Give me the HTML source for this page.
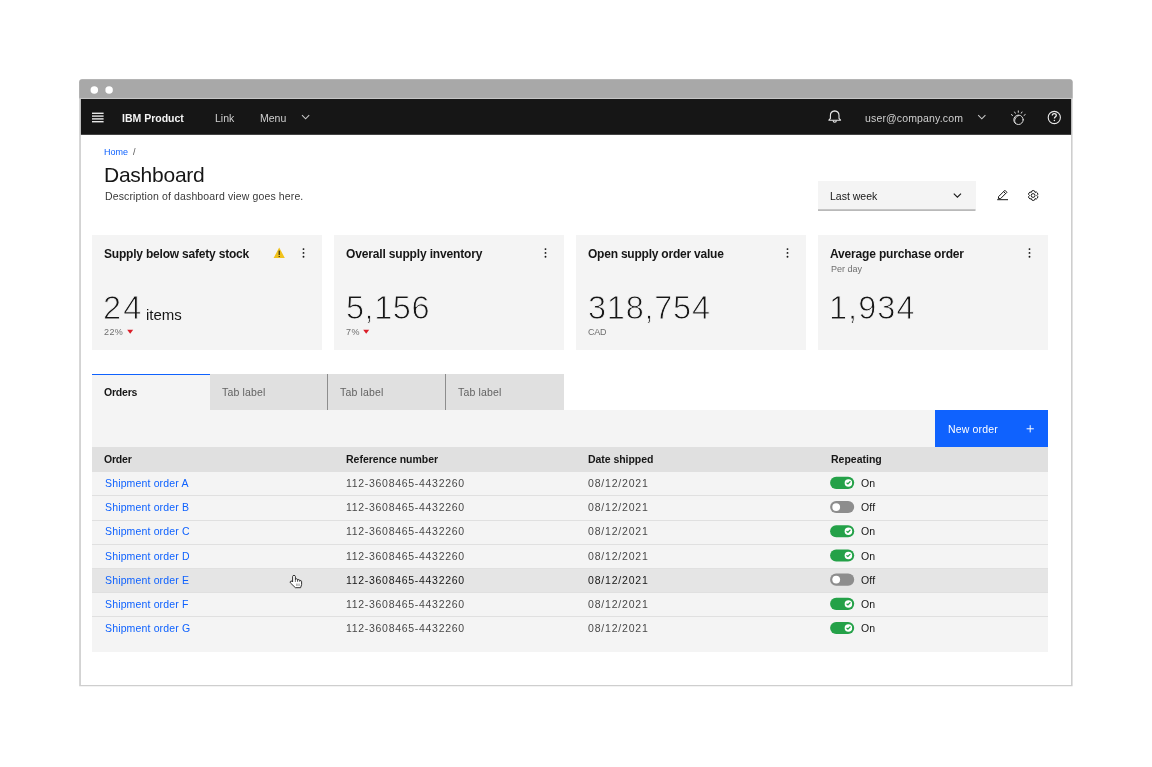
<!DOCTYPE html>
<html><head><meta charset="utf-8">
<style>
*{box-sizing:border-box;margin:0;padding:0}
html,body{width:1152px;height:767px;overflow:hidden;background:#fff}
body{position:relative;font-family:"Liberation Sans",sans-serif;color:#161616}
.a{position:absolute}
.t{position:absolute;white-space:nowrap;line-height:1;will-change:transform}
svg{position:absolute;overflow:visible}
</style></head><body>

<!-- window frame -->
<svg style="left:0;top:0" width="1152" height="767">
  <path d="M79.2 686.3 L79.2 82.2 Q79.2 79.2 82.2 79.2 L1069.6 79.2 Q1072.6 79.2 1072.6 82.2 L1072.6 686.3 Z" fill="#cecece"/>
  <path d="M79.2 97.9 L79.2 82.2 Q79.2 79.2 82.2 79.2 L1069.6 79.2 Q1072.6 79.2 1072.6 82.2 L1072.6 97.9 Z" fill="#a8a8a8"/>
  <rect x="79.2" y="97.9" width="993.4" height="1.1" fill="#c6c6c6"/>
  <rect x="80.9" y="99" width="990.1" height="586" fill="#fff"/>
  <circle cx="94.3" cy="89.9" r="3.75" fill="#fff"/>
  <circle cx="109.1" cy="89.9" r="3.75" fill="#fff"/>
</svg>

<!-- header -->
<svg style="left:0;top:0" width="1" height="1"><rect x="80.9" y="99" width="990.2" height="35.8" fill="#161616"/></svg>
<svg style="left:0;top:0" width="1152" height="140">
  <g fill="#e8e8e8">
    <rect x="92" y="112.6" width="11.6" height="1.4"/>
    <rect x="92" y="115.4" width="11.6" height="1.4"/>
    <rect x="92" y="118.2" width="11.6" height="1.4"/>
    <rect x="92" y="121.0" width="11.6" height="1.4"/>
  </g>
</svg>
<div class="t" style="left:121.7px;top:112.6px;font-size:10.5px;font-weight:700;color:#f4f4f4">IBM Product</div>
<div class="t" style="left:215.4px;top:112.6px;font-size:10.5px;color:#d0d0d0">Link</div>
<div class="t" style="left:260.2px;top:112.6px;font-size:10.5px;color:#d0d0d0">Menu</div>
<div class="t" style="left:865.1px;top:112.6px;font-size:10.5px;color:#d0d0d0;letter-spacing:0.15px">user@company.com</div>


<!-- header right -->
<svg style="left:0;top:0" width="1152" height="140">
  <!-- menu chevron -->
  <path d="M302 115.2 L305.6 118.8 L309.2 115.2" fill="none" stroke="#c6c6c6" stroke-width="1.1"/>
  <!-- bell -->
  <path d="M828.9 120.2 L830.4 118.4 L830.4 115.4 C830.4 112.8 832.1 111.2 834.7 110.9 C837.3 111.2 839 112.8 839 115.4 L839 118.4 L840.6 120.2 Z" fill="none" stroke="#e8e8e8" stroke-width="1.1" stroke-linejoin="round"/>
  <path d="M833.1 120.6 A1.65 1.65 0 0 0 836.4 120.6" fill="none" stroke="#e8e8e8" stroke-width="1.1"/>
  <!-- user chevron -->
  <path d="M978.2 115.2 L981.8 118.8 L985.4 115.2" fill="none" stroke="#c6c6c6" stroke-width="1.1"/>
  <!-- watson -->
  <g fill="none" stroke="#e0e0e0" stroke-width="1" stroke-linecap="round">
    <circle cx="1018.5" cy="119.8" r="4.7"/>
    <path d="M1015.6 123.6 C1013.4 121 1015 116.6 1018.6 115.6"/>
    <path d="M1018.3 110.9 L1018.3 112.3"/>
    <path d="M1014.6 112.0 L1015.3 113.2"/>
    <path d="M1022.0 112.0 L1021.3 113.2"/>
    <path d="M1011.4 114.6 L1012.6 115.4"/>
    <path d="M1025.2 114.6 L1024.0 115.4"/>
  </g>
  <!-- help -->
  <circle cx="1054.3" cy="117.5" r="6.1" fill="none" stroke="#e8e8e8" stroke-width="1.1"/>
  <path d="M1052.3 115.5 C1052.3 114.3 1053.2 113.6 1054.3 113.6 C1055.5 113.6 1056.3 114.4 1056.3 115.4 C1056.3 116.7 1054.4 116.8 1054.4 118.5" fill="none" stroke="#e8e8e8" stroke-width="1.3"/>
  <circle cx="1054.4" cy="120.6" r="0.75" fill="#e8e8e8"/>
</svg>

<!-- page header -->
<div class="t" style="left:104.2px;top:147.9px;font-size:9px;color:#0f62fe">Home</div>
<div class="t" style="left:132.5px;top:147.9px;font-size:9px;color:#525252">/</div>
<div class="t" style="left:104.3px;top:164.1px;font-size:21px;color:#161616;letter-spacing:-0.25px">Dashboard</div>
<div class="t" style="left:104.5px;top:190.8px;font-size:10.5px;color:#393939;letter-spacing:0.13px">Description of dashboard view goes here.</div>

<!-- dropdown -->
<div class="a" style="left:818px;top:181px;width:157.5px;height:29px;background:#f4f4f4"></div>
<svg style="left:0;top:0" width="1" height="1"><rect x="818" y="209.4" width="157.5" height="1.4" fill="#a8a8a8"/></svg>
<div class="t" style="left:830.4px;top:190.5px;font-size:10.5px;color:#161616">Last week</div>
<svg style="left:0;top:0" width="1152" height="220">
  <path d="M953.8 193.6 L957.4 197.2 L961 193.6" fill="none" stroke="#161616" stroke-width="1.1"/>
  <!-- edit -->
  <g fill="none" stroke="#161616" stroke-width="1">
    <path d="M997.2 199.7 L1008 199.7"/>
    <path d="M998.4 198.6 L998.6 196.6 L1004.9 190.3 L1006.9 192.3 L1000.6 198.6 Z" stroke-linejoin="round"/>
    <path d="M1003.6 191.6 L1005.6 193.6"/>
  </g>
  <!-- settings gear -->
  <g fill="none" stroke="#161616" stroke-width="1">
    <path d="M1031.38 192.34 A1.65 1.65 0 0 1 1035.03 192.34 A1.65 1.65 0 0 1 1036.85 195.50 A1.65 1.65 0 0 1 1035.03 198.66 A1.65 1.65 0 0 1 1031.38 198.66 A1.65 1.65 0 0 1 1029.55 195.50 A1.65 1.65 0 0 1 1031.38 192.34 Z" stroke-linejoin="round"/>
    <circle cx="1033.1" cy="195.5" r="1.9"/>
  </g>
</svg>


<!-- cards -->
<div class="a" style="left:91.5px;top:235px;width:230px;height:114.5px;background:#f4f4f4"></div>
<div class="t" style="left:104.0px;top:247.9px;font-size:12px;font-weight:700;color:#161616;letter-spacing:-0.2px">Supply below safety stock</div>
<svg style="left:0;top:0" width="1" height="1"><g fill="#161616"><circle cx="303.5" cy="249.1" r="0.95"/><circle cx="303.5" cy="252.9" r="0.95"/><circle cx="303.5" cy="256.7" r="0.95"/></g></svg>
<svg style="left:0;top:0" width="1" height="1"><path d="M279.2 247.6 L284.8 258 L273.6 258 Z" fill="#f1c21b"/><rect x="278.7" y="250.6" width="1" height="4.4" fill="#161616"/><rect x="278.7" y="256" width="1" height="1" fill="#161616"/></svg>
<div class="t" style="left:103px;top:292px;font-size:32.5px;color:#161616;-webkit-text-stroke:0.9px #f4f4f4;letter-spacing:2.3px">24</div>
<div class="t" style="left:146.0px;top:306.6px;font-size:15px;color:#161616">items</div>
<div class="t" style="left:104.0px;top:327.9px;font-size:9px;color:#6f6f6f;letter-spacing:0.4px">22%</div>
<svg style="left:0;top:0" width="1" height="1"><path d="M127.2 329.8 L133.2 329.8 L130.2 333.8 Z" fill="#da1e28"/></svg>
<div class="a" style="left:333.5px;top:235px;width:230px;height:114.5px;background:#f4f4f4"></div>
<div class="t" style="left:346.0px;top:247.9px;font-size:12px;font-weight:700;color:#161616;letter-spacing:-0.16px">Overall supply inventory</div>
<svg style="left:0;top:0" width="1" height="1"><g fill="#161616"><circle cx="545.5" cy="249.1" r="0.95"/><circle cx="545.5" cy="252.9" r="0.95"/><circle cx="545.5" cy="256.7" r="0.95"/></g></svg>
<div class="t" style="left:346px;top:292px;font-size:32.5px;color:#161616;-webkit-text-stroke:0.9px #f4f4f4;letter-spacing:0.55px">5,156</div>
<div class="t" style="left:346.0px;top:327.9px;font-size:9px;color:#6f6f6f;letter-spacing:0.4px">7%</div>
<div class="a" style="left:575.5px;top:235px;width:230px;height:114.5px;background:#f4f4f4"></div>
<div class="t" style="left:588.0px;top:247.9px;font-size:12px;font-weight:700;color:#161616;letter-spacing:-0.22px">Open supply order value</div>
<svg style="left:0;top:0" width="1" height="1"><g fill="#161616"><circle cx="787.5" cy="249.1" r="0.95"/><circle cx="787.5" cy="252.9" r="0.95"/><circle cx="787.5" cy="256.7" r="0.95"/></g></svg>
<div class="t" style="left:588.0px;top:292px;font-size:32.5px;color:#161616;-webkit-text-stroke:0.9px #f4f4f4;letter-spacing:0.75px">318,754</div>
<div class="t" style="left:588.0px;top:327.9px;font-size:9px;color:#6f6f6f;letter-spacing:-0.3px">CAD</div>
<div class="a" style="left:817.5px;top:235px;width:230px;height:114.5px;background:#f4f4f4"></div>
<div class="t" style="left:830.0px;top:247.9px;font-size:12px;font-weight:700;color:#161616;letter-spacing:-0.17px">Average purchase order</div>
<svg style="left:0;top:0" width="1" height="1"><g fill="#161616"><circle cx="1029.5" cy="249.1" r="0.95"/><circle cx="1029.5" cy="252.9" r="0.95"/><circle cx="1029.5" cy="256.7" r="0.95"/></g></svg>
<div class="t" style="left:830.5px;top:265px;font-size:9px;color:#6f6f6f">Per day</div>
<div class="t" style="left:829px;top:292px;font-size:32.5px;color:#161616;-webkit-text-stroke:0.9px #f4f4f4;letter-spacing:1.05px">1,934</div>
<svg style="left:0;top:0" width="1" height="1"><path d="M363.2 329.8 L369.2 329.8 L366.2 333.8 Z" fill="#da1e28"/></svg>


<!-- tabs -->
<div class="a" style="left:91.5px;top:374px;width:118.2px;height:36px;background:#f4f4f4;border-top:1.5px solid #0f62fe"></div>
<div class="t" style="left:104.2px;top:387.3px;font-size:10.5px;font-weight:700;color:#161616;letter-spacing:-0.2px">Orders</div>
<div class="a" style="left:209.7px;top:374px;width:354px;height:36px;background:#e0e0e0"></div>
<div class="a" style="left:327.2px;top:374px;width:1px;height:36px;background:#8d8d8d"></div>
<div class="a" style="left:445.2px;top:374px;width:1px;height:36px;background:#8d8d8d"></div>
<div class="t" style="left:222.2px;top:387.3px;font-size:10.5px;color:#636363;letter-spacing:0.15px">Tab label</div>
<div class="t" style="left:340.2px;top:387.3px;font-size:10.5px;color:#636363;letter-spacing:0.15px">Tab label</div>
<div class="t" style="left:458.2px;top:387.3px;font-size:10.5px;color:#636363;letter-spacing:0.15px">Tab label</div>

<!-- table container -->
<div class="a" style="left:91.5px;top:410px;width:956.5px;height:242.3px;background:#f4f4f4"></div>
<div class="a" style="left:935.2px;top:410px;width:112.8px;height:36.8px;background:#0f62fe"></div>
<div class="t" style="left:947.8px;top:423.7px;font-size:10.5px;color:#fff;letter-spacing:0.15px">New order</div>
<svg style="left:0;top:0" width="1" height="1"><g stroke="#fff" stroke-width="1"><path d="M1030.2 425.2 L1030.2 432.4"/><path d="M1026.6 428.8 L1033.8 428.8"/></g></svg>
<div class="a" style="left:91.5px;top:446.8px;width:956.5px;height:24.8px;background:#e0e0e0"></div>
<div class="t" style="left:104.2px;top:454.3px;font-size:10.5px;font-weight:700;color:#161616;letter-spacing:-0.2px">Order</div>
<div class="t" style="left:346.1px;top:454.3px;font-size:10.5px;font-weight:700;color:#161616">Reference number</div>
<div class="t" style="left:588.4px;top:454.3px;font-size:10.5px;font-weight:700;color:#161616;letter-spacing:-0.05px">Date shipped</div>
<div class="t" style="left:830.5px;top:454.3px;font-size:10.5px;font-weight:700;color:#161616">Repeating</div>
<div class="t" style="left:104.6px;top:478.0px;font-size:10.5px;color:#0f62fe;letter-spacing:0.15px">Shipment order A</div>
<div class="t" style="left:346px;top:478.0px;font-size:10.5px;color:#484848;letter-spacing:0.7px">112-3608465-4432260</div>
<div class="t" style="left:588.4px;top:478.0px;font-size:10.5px;color:#484848;letter-spacing:0.8px">08/12/2021</div>
<svg style="left:0;top:0" width="1" height="1"><rect x="830.1" y="476.8" width="24.1" height="12.1" rx="6.05" fill="#24a148"/><circle cx="848.4" cy="482.9" r="3.75" fill="#fff"/><path d="M846.9 483.1 L847.9 483.9 L850.0 481.8" fill="none" stroke="#24a148" stroke-width="1.3" stroke-linecap="round"/></svg>
<div class="t" style="left:860.7px;top:478.0px;font-size:10.5px;color:#161616;letter-spacing:0.2px">On</div>
<div class="a" style="left:91.5px;top:495.3px;width:956.5px;height:1px;background:#e0e0e0"></div>
<div class="t" style="left:104.6px;top:502.2px;font-size:10.5px;color:#0f62fe;letter-spacing:0.15px">Shipment order B</div>
<div class="t" style="left:346px;top:502.2px;font-size:10.5px;color:#484848;letter-spacing:0.7px">112-3608465-4432260</div>
<div class="t" style="left:588.4px;top:502.2px;font-size:10.5px;color:#484848;letter-spacing:0.8px">08/12/2021</div>
<svg style="left:0;top:0" width="1" height="1"><rect x="830.1" y="501.0" width="24.1" height="12.1" rx="6.05" fill="#8d8d8d"/><circle cx="836.2" cy="507.1" r="3.9" fill="#fff"/></svg>
<div class="t" style="left:860.7px;top:502.2px;font-size:10.5px;color:#161616;letter-spacing:0.2px">Off</div>
<div class="a" style="left:91.5px;top:519.5px;width:956.5px;height:1px;background:#e0e0e0"></div>
<div class="t" style="left:104.6px;top:526.4px;font-size:10.5px;color:#0f62fe;letter-spacing:0.15px">Shipment order C</div>
<div class="t" style="left:346px;top:526.4px;font-size:10.5px;color:#484848;letter-spacing:0.7px">112-3608465-4432260</div>
<div class="t" style="left:588.4px;top:526.4px;font-size:10.5px;color:#484848;letter-spacing:0.8px">08/12/2021</div>
<svg style="left:0;top:0" width="1" height="1"><rect x="830.1" y="525.2" width="24.1" height="12.1" rx="6.05" fill="#24a148"/><circle cx="848.4" cy="531.2" r="3.75" fill="#fff"/><path d="M846.9 531.5 L847.9 532.3 L850.0 530.2" fill="none" stroke="#24a148" stroke-width="1.3" stroke-linecap="round"/></svg>
<div class="t" style="left:860.7px;top:526.4px;font-size:10.5px;color:#161616;letter-spacing:0.2px">On</div>
<div class="a" style="left:91.5px;top:543.7px;width:956.5px;height:1px;background:#e0e0e0"></div>
<div class="t" style="left:104.6px;top:550.6px;font-size:10.5px;color:#0f62fe;letter-spacing:0.15px">Shipment order D</div>
<div class="t" style="left:346px;top:550.6px;font-size:10.5px;color:#484848;letter-spacing:0.7px">112-3608465-4432260</div>
<div class="t" style="left:588.4px;top:550.6px;font-size:10.5px;color:#484848;letter-spacing:0.8px">08/12/2021</div>
<svg style="left:0;top:0" width="1" height="1"><rect x="830.1" y="549.4" width="24.1" height="12.1" rx="6.05" fill="#24a148"/><circle cx="848.4" cy="555.5" r="3.75" fill="#fff"/><path d="M846.9 555.7 L847.9 556.5 L850.0 554.4" fill="none" stroke="#24a148" stroke-width="1.3" stroke-linecap="round"/></svg>
<div class="t" style="left:860.7px;top:550.6px;font-size:10.5px;color:#161616;letter-spacing:0.2px">On</div>
<div class="a" style="left:91.5px;top:568.4px;width:956.5px;height:24.2px;background:#e5e5e5"></div>
<div class="a" style="left:91.5px;top:567.9px;width:956.5px;height:1px;background:#e0e0e0"></div>
<div class="t" style="left:104.6px;top:574.8px;font-size:10.5px;color:#0f62fe;letter-spacing:0.15px">Shipment order E</div>
<div class="t" style="left:346px;top:574.8px;font-size:10.5px;color:#161616;letter-spacing:0.7px">112-3608465-4432260</div>
<div class="t" style="left:588.4px;top:574.8px;font-size:10.5px;color:#161616;letter-spacing:0.8px">08/12/2021</div>
<svg style="left:0;top:0" width="1" height="1"><rect x="830.1" y="573.6" width="24.1" height="12.1" rx="6.05" fill="#8d8d8d"/><circle cx="836.2" cy="579.6" r="3.9" fill="#fff"/></svg>
<div class="t" style="left:860.7px;top:574.8px;font-size:10.5px;color:#161616;letter-spacing:0.2px">Off</div>
<div class="a" style="left:91.5px;top:592.1px;width:956.5px;height:1px;background:#e0e0e0"></div>
<div class="t" style="left:104.6px;top:599.0px;font-size:10.5px;color:#0f62fe;letter-spacing:0.15px">Shipment order F</div>
<div class="t" style="left:346px;top:599.0px;font-size:10.5px;color:#484848;letter-spacing:0.7px">112-3608465-4432260</div>
<div class="t" style="left:588.4px;top:599.0px;font-size:10.5px;color:#484848;letter-spacing:0.8px">08/12/2021</div>
<svg style="left:0;top:0" width="1" height="1"><rect x="830.1" y="597.8" width="24.1" height="12.1" rx="6.05" fill="#24a148"/><circle cx="848.4" cy="603.9" r="3.75" fill="#fff"/><path d="M846.9 604.1 L847.9 604.9 L850.0 602.8" fill="none" stroke="#24a148" stroke-width="1.3" stroke-linecap="round"/></svg>
<div class="t" style="left:860.7px;top:599.0px;font-size:10.5px;color:#161616;letter-spacing:0.2px">On</div>
<div class="a" style="left:91.5px;top:616.3px;width:956.5px;height:1px;background:#e0e0e0"></div>
<div class="t" style="left:104.6px;top:623.2px;font-size:10.5px;color:#0f62fe;letter-spacing:0.15px">Shipment order G</div>
<div class="t" style="left:346px;top:623.2px;font-size:10.5px;color:#484848;letter-spacing:0.7px">112-3608465-4432260</div>
<div class="t" style="left:588.4px;top:623.2px;font-size:10.5px;color:#484848;letter-spacing:0.8px">08/12/2021</div>
<svg style="left:0;top:0" width="1" height="1"><rect x="830.1" y="622.0" width="24.1" height="12.1" rx="6.05" fill="#24a148"/><circle cx="848.4" cy="628.0" r="3.75" fill="#fff"/><path d="M846.9 628.3 L847.9 629.1 L850.0 627.0" fill="none" stroke="#24a148" stroke-width="1.3" stroke-linecap="round"/></svg>
<div class="t" style="left:860.7px;top:623.2px;font-size:10.5px;color:#161616;letter-spacing:0.2px">On</div>
<svg style="left:0;top:0" width="1" height="1">
<path d="M292.6 582.0 L292.6 576.6 C292.6 574.9 295.4 574.9 295.4 576.6 L295.4 579.6 C295.6 578.4 297.6 578.5 297.6 579.9 L297.6 580.4 C297.8 579.2 299.8 579.3 299.8 580.7 L299.8 581.0 C300.2 580.0 301.6 580.4 301.6 581.6 L301.6 584.6 L300.6 587.7 L295.4 587.7 L290.4 582.9 C289.6 581.9 290.8 580.4 292.0 581.3 Z" fill="#fff" stroke="#1a1a1a" stroke-width="0.9" stroke-linejoin="round"/>
<g stroke="#1a1a1a" stroke-width="0.6"><path d="M295.4 579.8 L295.4 582"/><path d="M297.6 580.2 L297.6 582"/><path d="M299.8 580.8 L299.8 582"/></g>
<g stroke="#8a8a8a" stroke-width="0.7"><path d="M296.6 583.6 L296.6 586"/><path d="M297.9 583.6 L297.9 586"/><path d="M299.2 583.6 L299.2 586"/></g>
</svg>

</body></html>
